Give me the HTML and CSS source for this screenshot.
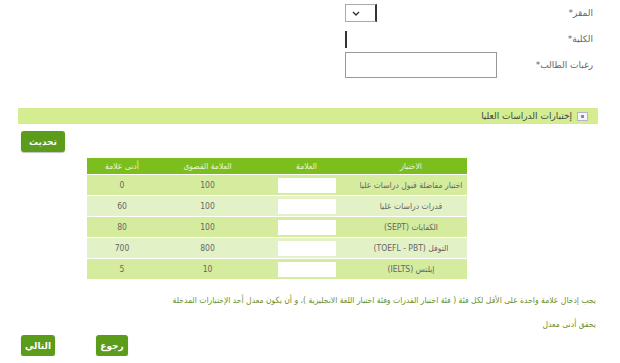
FILE: index.html
```html
<!DOCTYPE html>
<html lang="ar" dir="rtl">
<head>
<meta charset="utf-8">
<title>إختبارات الدراسات العليا</title>
<link rel="stylesheet" href="styles.css">
</head>
<body>
<div class="page">
  <div class="form">
    <label class="lbl">المقر*</label>
    <div class="field"><span class="select"><svg width="8" height="5" viewBox="0 0 8 5"><path d="M1 1l3 3 3-3" fill="none" stroke="#333" stroke-width="1.4"/></svg></span></div>
    <label class="lbl">الكلية*</label>
    <div class="field"><span class="caret"></span></div>
    <label class="lbl">رغبات الطالب*</label>
    <div class="field"><span class="textarea"></span></div>
  </div>

  <div class="section-bar">
    <span class="bar-icon"><span></span></span>
    <span class="bar-title">إختبارات الدراسات العليا</span>
  </div>

  <div class="toolbar">
    <button class="btn btn-update">تحديث</button>
  </div>

  <table class="tests">
    <thead>
      <tr><th class="c1">الاختبار</th><th class="c2">العلامة</th><th class="c3">العلامة القصوى</th><th class="c4">أدنى علامة</th></tr>
    </thead>
    <tbody>
      <tr><td>اختبار مفاضلة قبول دراسات عليا</td><td><span class="mark"></span></td><td>100</td><td>0</td></tr>
      <tr><td>قدرات دراسات عليا</td><td><span class="mark"></span></td><td>100</td><td>60</td></tr>
      <tr><td>الكفايات (SEPT)</td><td><span class="mark"></span></td><td>100</td><td>80</td></tr>
      <tr><td>التوفل (TOEFL - PBT)</td><td><span class="mark"></span></td><td>800</td><td>700</td></tr>
      <tr><td>إيلتس (IELTS)</td><td><span class="mark"></span></td><td>10</td><td>5</td></tr>
    </tbody>
  </table>

  <p class="note">يجب إدخال علامة واحدة على الأقل لكل فئة ( فئة اختبار القدرات وفئة اختبار اللغة الانجليزية )، و أن يكون معدل أحد الإختبارات المدخلة<br>يحقق أدنى معدل</p>

  <div class="actions">
    <button class="btn btn-back">رجوع</button>
    <button class="btn btn-next">التالي</button>
  </div>
</div>
</body>
</html>
```

FILE: styles.css
```css
html, body {
  margin: 0;
  background: #fff;
}
body {
  font-family: "DejaVu Sans", sans-serif;
  font-size: 9px;
  color: #555;
}
.page {
  padding: 0 22px 0 18px;
}
.form {
  display: grid;
  grid-template-columns: 96px 152px;
  grid-auto-rows: 26px;
  align-items: center;
  padding-right: 5px;
}
.lbl {
  color: #666;
  font-size: 9px;
}
.field {
  display: flex;
  justify-content: flex-end;
}
.select {
  width: 32px;
  height: 18px;
  border: 1px solid #aaa;
  border-right: 2px solid #333;
  display: flex;
  align-items: center;
  justify-content: flex-end;
  padding-left: 6px;
  box-sizing: border-box;
}
.caret {
  width: 0;
  height: 17px;
  border-left: 2px solid #333;
}
.textarea {
  width: 152px;
  height: 26px;
  border: 1px solid #999;
  box-sizing: border-box;
}
.section-bar {
  margin-top: 30px;
  height: 16px;
  background: #d4ed91;
  display: flex;
  align-items: center;
  gap: 5px;
  padding-right: 10px;
}
.bar-icon {
  width: 9px;
  height: 7px;
  border: 1px solid #b5b5c5;
  background: #f4f4fa;
  display: flex;
  align-items: center;
  justify-content: center;
}
.bar-icon span {
  width: 3px;
  height: 3px;
  background: #8088b8;
}
.bar-title {
  color: #444;
  font-size: 9px;
}
.toolbar {
  display: flex;
  justify-content: flex-end;
  margin-top: 7px;
  padding-left: 3px;
}
.btn {
  font-family: "DejaVu Sans", sans-serif;
  font-size: 9px;
  font-weight: bold;
  color: #fff;
  background: #5b9c1a;
  border: none;
  border-radius: 3px;
  height: 21px;
  padding: 0;
  box-shadow: 0 1px 1px rgba(0,0,0,0.25);
}
.btn-update { width: 44px; }
.btn-back { width: 32px; }
.btn-next { width: 34px; }
.tests {
  border-collapse: collapse;
  table-layout: fixed;
  margin-top: 6px;
  margin-right: 131px;
  width: 380px;
  text-align: center;
  font-family: "DejaVu Sans Condensed", "DejaVu Sans", sans-serif;
  font-size: 8.5px;
}
.tests th {
  background: #7dbe1f;
  color: #e9f5d3;
  font-weight: normal;
  height: 16px;
  padding: 0;
}
.tests td {
  height: 20px;
  padding: 0;
  color: #666;
  border-top: 1px solid #fff;
  white-space: nowrap;
}
.tests tbody tr:nth-child(odd) td { background: #d5ec9e; }
.tests tbody tr:nth-child(even) td { background: #e3f1c6; }
.c1 { width: 112px; }
.c2 { width: 97px; }
.c3 { width: 101px; }
.c4 { width: 70px; }
.mark {
  display: inline-block;
  width: 58px;
  height: 15px;
  background: #fff;
  vertical-align: middle;
}
.note {
  margin: 9px 2px 0 0;
  line-height: 24px;
  color: #6e8f2b;
  font-family: "DejaVu Sans Condensed", "DejaVu Sans", sans-serif;
  font-size: 8.5px;
}
.actions {
  display: flex;
  justify-content: flex-end;
  gap: 41px;
  margin-top: -1px;
  padding-left: 3px;
}
```
